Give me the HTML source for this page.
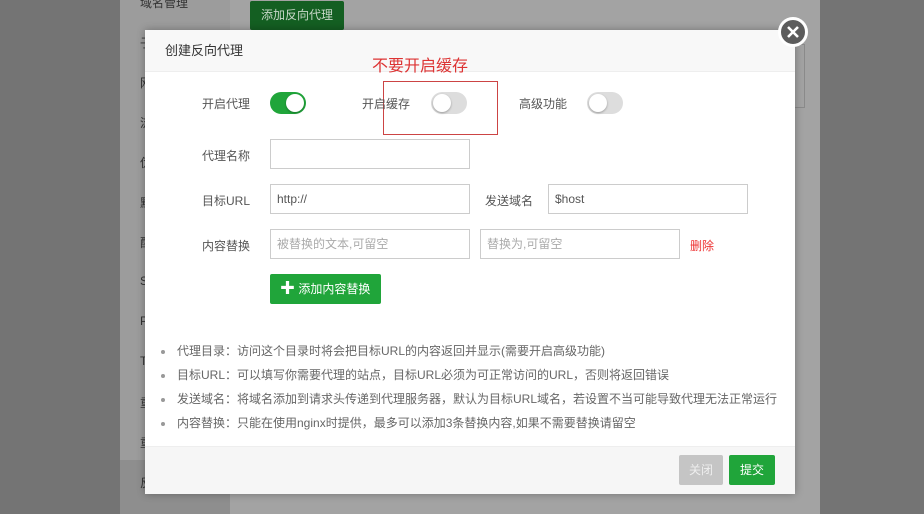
<!DOCTYPE html>
<html><head><meta charset="utf-8"><style>
*{box-sizing:border-box;margin:0;padding:0}
body{width:924px;height:514px;overflow:hidden;position:relative;background:#747474;font-family:"Liberation Sans","Noto Sans CJK SC",sans-serif;font-size:12px;color:#555}
.abs{position:absolute}
.lbl{position:absolute;color:#555;font-size:12px;text-align:right;width:80px}
.inp{position:absolute;height:30px;border:1px solid #ccc;background:#fff;padding:0 6px;line-height:28px;font-size:12px;color:#555}
.ph{color:#aaa}
.sw{position:absolute;width:36px;height:22px;border-radius:11px;background:#ddd}
.sw i{position:absolute;top:2px;left:2px;width:18px;height:18px;border-radius:50%;background:#fff;box-shadow:0 1px 2px rgba(0,0,0,.3)}
.sw.on{background:#20a53a}.sw.on i{left:16px}
li{list-style:none;position:relative;padding-left:32px;height:24px;line-height:24px;color:#666;font-size:12px}
li:before{content:"";position:absolute;left:16px;top:11px;width:4px;height:4px;border-radius:50%;background:#999}
</style></head><body>
<div class="abs" style="left:120px;top:0;width:700px;height:514px;background:#a3a3a3"></div>
<div class="abs" style="left:120px;top:0;width:110px;height:514px;background:#9c9c9c"></div>
<div class="abs" style="left:120px;top:460px;width:110px;height:54px;background:#8e8e8e"></div>
<div class="abs" style="left:140px;top:-6px;color:#333;font-size:12px">域名管理</div>
<div class="abs" style="left:140px;top:34px;color:#333">子</div>
<div class="abs" style="left:140px;top:74px;color:#333">网</div>
<div class="abs" style="left:140px;top:114px;color:#333">流</div>
<div class="abs" style="left:140px;top:154px;color:#333">伪</div>
<div class="abs" style="left:140px;top:194px;color:#333">默</div>
<div class="abs" style="left:140px;top:234px;color:#333">配</div>
<div class="abs" style="left:140px;top:274px;color:#333">S</div>
<div class="abs" style="left:140px;top:314px;color:#333">P</div>
<div class="abs" style="left:140px;top:354px;color:#333">T</div>
<div class="abs" style="left:140px;top:394px;color:#333">重</div>
<div class="abs" style="left:140px;top:434px;color:#333">重</div>
<div class="abs" style="left:140px;top:474px;color:#333">反</div>
<div class="abs" style="left:250px;top:1px;width:94px;height:29px;background:#145f22;border-radius:2px;color:#c8d8c8;line-height:29px;text-align:center;font-size:12px">添加反向代理</div>
<div class="abs" style="left:795px;top:44px;width:10px;height:64px;border:1px solid #8a8a8a;border-left:none"></div>

<div class="abs" style="left:145px;top:30px;width:650px;height:464px;background:#fff;box-shadow:0 0 8px rgba(0,0,0,.3)">
 <div class="abs" style="left:0;top:0;width:650px;height:42px;background:#f8f8f8;border-bottom:1px solid #eee;padding-left:20px;line-height:42px;font-size:13px;color:#333">创建反向代理</div>
 <div class="abs" style="left:0;top:416px;width:650px;height:48px;background:#f6f6f6;border-top:1px solid #eee"></div>
 <div class="abs" style="left:534px;top:425px;width:44px;height:30px;background:#c5c5c5;border-radius:2px;color:#eee;text-align:center;line-height:30px">关闭</div>
 <div class="abs" style="left:584px;top:425px;width:46px;height:30px;background:#20a53a;border-radius:2px;color:#fff;text-align:center;line-height:30px">提交</div>
</div>
<div class="abs" style="left:372px;top:52px;color:#d33;font-size:16px">不要开启缓存</div>
<div class="abs" style="left:383px;top:81px;width:115px;height:54px;border:1px solid #c44"></div>

<div class="lbl" style="left:170px;top:95px">开启代理</div>
<div class="sw on" style="left:270px;top:92px"><i></i></div>
<div class="abs" style="left:362px;top:95px;color:#555">开启缓存</div>
<div class="sw" style="left:431px;top:92px"><i></i></div>
<div class="abs" style="left:519px;top:95px;color:#555">高级功能</div>
<div class="sw" style="left:587px;top:92px"><i></i></div>

<div class="lbl" style="left:170px;top:147px">代理名称</div>
<div class="inp" style="left:270px;top:139px;width:200px"></div>
<div class="lbl" style="left:170px;top:192px">目标URL</div>
<div class="inp" style="left:270px;top:184px;width:200px">http://</div>
<div class="abs" style="left:485px;top:192px;color:#555">发送域名</div>
<div class="inp" style="left:548px;top:184px;width:200px">$host</div>
<div class="lbl" style="left:170px;top:237px">内容替换</div>
<div class="inp ph" style="left:270px;top:229px;width:200px">被替换的文本,可留空</div>
<div class="inp ph" style="left:480px;top:229px;width:200px">替换为,可留空</div>
<div class="abs" style="left:690px;top:237px;color:#e33">删除</div>
<div class="abs" style="left:270px;top:274px;width:111px;height:30px;background:#20a53a;border-radius:2px;color:#fff;line-height:30px;padding-left:10px;font-size:12px"><b style="font-size:15px">✚</b> 添加内容替换</div>

<ul class="abs" style="left:145px;top:339px;width:650px">
<li>代理目录：访问这个目录时将会把目标URL的内容返回并显示(需要开启高级功能)</li>
<li>目标URL：可以填写你需要代理的站点，目标URL必须为可正常访问的URL，否则将返回错误</li>
<li>发送域名：将域名添加到请求头传递到代理服务器，默认为目标URL域名，若设置不当可能导致代理无法正常运行</li>
<li>内容替换：只能在使用nginx时提供，最多可以添加3条替换内容,如果不需要替换请留空</li>
</ul>

<div class="abs" style="left:778px;top:17px;width:30px;height:30px;border-radius:50%;background:#5c5c5c;border:3px solid #fff"></div>
<svg class="abs" style="left:778px;top:17px" width="30" height="30"><path d="M10 10L20 20M20 10L10 20" stroke="#fff" stroke-width="2.6"/></svg>
</body></html>
